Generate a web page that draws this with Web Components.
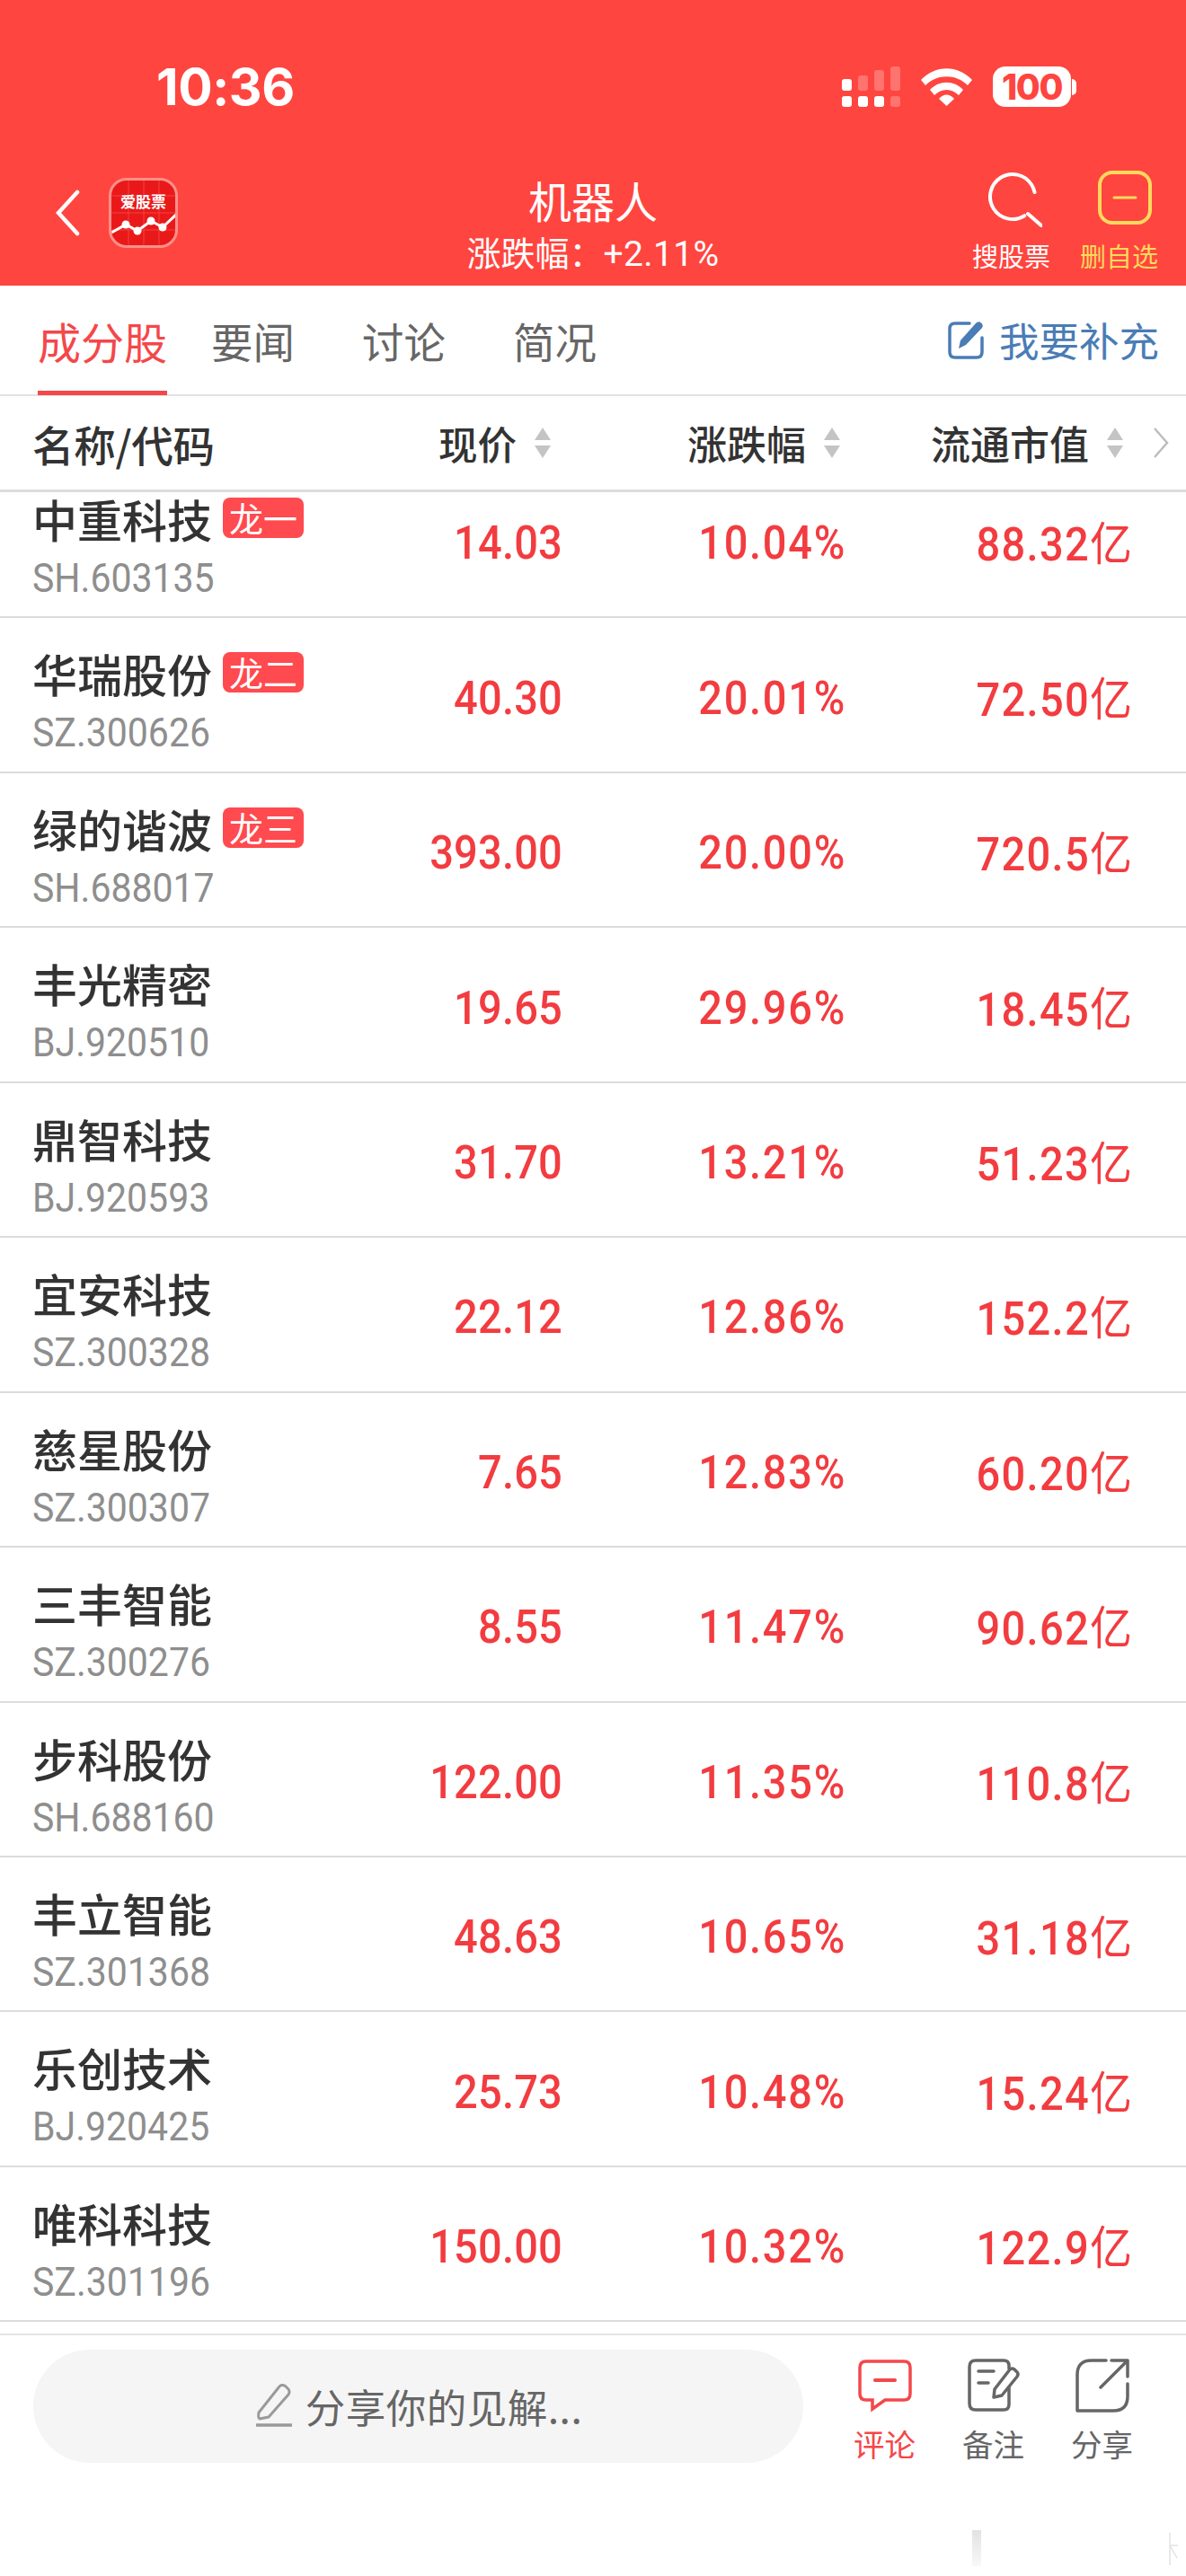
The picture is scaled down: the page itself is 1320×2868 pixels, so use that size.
<!DOCTYPE html>
<html lang="zh-CN">
<head>
<meta charset="utf-8">
<title>机器人</title>
<style>
  html, body { margin: 0; padding: 0; background: #fff; }
  body {
    width: 1320px;
    height: 2868px;
    overflow: hidden;
    font-family: "Noto Sans CJK SC", "Noto Sans", sans-serif;
  }
  app-page { height: 2868px; }
</style>
</head>
<body>
<app-page>
  <nav-header slot="top" title="机器人" change="+2.11%"></nav-header>
  <tab-bar slot="top"></tab-bar>
  <stock-table>
    <stock-row code="SH.603135" price="14.03" pct="10.04%" cap="88.32" tag="龙一" style="margin-top:-32px">中重科技</stock-row>
    <stock-row code="SZ.300626" price="40.30" pct="20.01%" cap="72.50" tag="龙二">华瑞股份</stock-row>
    <stock-row code="SH.688017" price="393.00" pct="20.00%" cap="720.5" tag="龙三">绿的谐波</stock-row>
    <stock-row code="BJ.920510" price="19.65" pct="29.96%" cap="18.45">丰光精密</stock-row>
    <stock-row code="BJ.920593" price="31.70" pct="13.21%" cap="51.23">鼎智科技</stock-row>
    <stock-row code="SZ.300328" price="22.12" pct="12.86%" cap="152.2">宜安科技</stock-row>
    <stock-row code="SZ.300307" price="7.65" pct="12.83%" cap="60.20">慈星股份</stock-row>
    <stock-row code="SZ.300276" price="8.55" pct="11.47%" cap="90.62">三丰智能</stock-row>
    <stock-row code="SH.688160" price="122.00" pct="11.35%" cap="110.8">步科股份</stock-row>
    <stock-row code="SZ.301368" price="48.63" pct="10.65%" cap="31.18">丰立智能</stock-row>
    <stock-row code="BJ.920425" price="25.73" pct="10.48%" cap="15.24">乐创技术</stock-row>
    <stock-row code="SZ.301196" price="150.00" pct="10.32%" cap="122.9">唯科科技</stock-row>
  </stock-table>
  <comment-bar></comment-bar>
</app-page>

<script>
const CJK = '"Noto Sans CJK SC", "Noto Sans", sans-serif';

class AppPage extends HTMLElement {
  constructor() {
    super();
    this.attachShadow({ mode: 'open' });
    this.shadowRoot.innerHTML = `
      <style>
        :host { display: flex; flex-direction: column; width: 1320px; background: #fff; }
      </style>
      <slot name="top"></slot>
      <slot></slot>`;
  }
}

class NavHeader extends HTMLElement {
  connectedCallback() {
    const root = this.attachShadow({ mode: 'open' });
    root.innerHTML = `
      <style>
        :host { display: block; height: 318px; background: #ff453f; color: #fff; font-family: ${CJK}; }
        .status { height: 190px; box-sizing: border-box; padding: 74px 122px 0 174px; display: flex; justify-content: space-between; }
        .time { font: 700 57px/46px Inter, sans-serif; letter-spacing: -.4px; }
        .status-icons { display: flex; align-items: flex-start; }
        .signal { margin-right: 23px; display: block; }
        .wifi { margin: 2px 23px 0 0; display: block; }
        .battery { display: flex; align-items: center; height: 45px; }
        .battery-body { width: 87px; height: 45px; border-radius: 14px; background: #fff; color: #ff453f;
          font: 800 39px/45px Inter, sans-serif; letter-spacing: -1.4px; text-align: center; }
        .battery-tip { width: 5px; height: 18px; margin-left: 1px; background: #fff; border-radius: 0 5px 5px 0; }
        .nav { height: 128px; display: grid; grid-template-columns: 1fr auto 1fr; align-items: start; }
        .left { display: flex; align-items: center; padding: 8px 0 0 62px; gap: 32px; }
        .left svg { display: block; }
        .center { text-align: center; padding-top: 4px; }
        .title { font-size: 48px; line-height: 56px; }
        .sub { font-size: 38px; line-height: 44px; margin-top: 8px; white-space: nowrap; }
        .sub b { font: 400 39px/44px Roboto, sans-serif; letter-spacing: .4px; }
        .right { display: flex; justify-content: flex-end; padding-right: 31px; gap: 33px; }
        .action { display: flex; flex-direction: column; align-items: center; font-size: 29px; line-height: 34px; }
        .action svg { display: block; margin-bottom: 15px; transform: translate(2px, 1px); }
        .fav { color: #ffd95e; }
        .fav svg { transform: translateX(7px); }
      </style>
      <div class="status">
        <div class="time">10:36</div>
        <div class="status-icons">
          <svg class="signal" width="65" height="45" viewBox="0 0 65 45">
            <rect x="0" y="14" width="11" height="13" rx="3" fill="#fff"/>
            <g fill="#fff" opacity=".25">
              <rect x="18" y="10" width="11" height="17" rx="3"/>
              <rect x="36" y="4" width="11" height="23" rx="3"/>
              <rect x="54" y="0" width="11" height="27" rx="3"/>
              <rect x="54" y="33" width="11" height="12" rx="3"/>
            </g>
            <rect x="0" y="33" width="11" height="12" rx="3" fill="#fff"/>
            <rect x="18" y="33" width="11" height="12" rx="3" fill="#fff"/>
            <rect x="36" y="33" width="11" height="12" rx="3" fill="#fff"/>
          </svg>
          <svg class="wifi" width="57" height="42" viewBox="0 0 57 42" fill="#fff">
            <path d="M0 13 C16 -4 41 -4 57 13 L52 19 C39 6 18 6 5 19Z"/>
            <path d="M10 24 C20 13 37 13 47 24 L42 30 C34 22 23 22 15 30Z"/>
            <path d="M20 34 C25 28 32 28 37 34 L28.5 42Z"/>
          </svg>
          <div class="battery">
            <div class="battery-body">100</div>
            <div class="battery-tip"></div>
          </div>
        </div>
      </div>
      <div class="nav">
        <div class="left">
          <svg width="27" height="52" viewBox="0 0 27 52" fill="none" stroke="#fff" stroke-width="4.5" stroke-linecap="round">
            <path d="M24 3 L3 26 L24 49"/>
          </svg>
          <app-logo></app-logo>
        </div>
        <div class="center">
          <div class="title">${this.getAttribute('title')}</div>
          <div class="sub">涨跌幅：<b>${this.getAttribute('change')}</b></div>
        </div>
        <div class="right">
          <div class="action">
            <svg width="66" height="62" viewBox="0 0 66 62" fill="none" stroke="#fff" stroke-width="4" stroke-linecap="round">
              <circle cx="33" cy="28" r="25" stroke-dasharray="126 31" transform="rotate(58 33 28)"/>
              <path d="M50 47 L66 61"/>
            </svg>
            搜股票
          </div>
          <div class="action fav">
            <svg width="60" height="62" viewBox="0 0 60 62" fill="none" stroke="#ffd95e" stroke-width="4" stroke-linecap="round">
              <rect x="2" y="2" width="56" height="56" rx="14"/>
              <path d="M18 30 H42" stroke-width="3"/>
            </svg>
            删自选
          </div>
        </div>
      </div>`;
  }
}

class AppLogo extends HTMLElement {
  constructor() {
    super();
    this.attachShadow({ mode: 'open' });
    this.shadowRoot.innerHTML = `
      <style>
        :host { display: block; position: relative; width: 77px; height: 78px; box-sizing: border-box;
          border: 3px solid #ff8f8a; border-radius: 20px; background: #e9191a; overflow: hidden; }
        svg { display: block; position: absolute; left: -3px; top: -3px; }
        span { position: absolute; left: 0; right: 0; top: 12px; text-align: center; color: #fff;
          font: 700 17px/22px ${CJK}; }
      </style>
      <svg width="77" height="78" viewBox="0 0 77 78">
        <path d="M22 0 V78 M39 0 V78 M56 0 V78 M0 20 H77 M0 39 H77 M0 58 H77" stroke="#f4423e" stroke-width="1"/>
        <path d="M3 61 L19 52 L32 59 L47 48 L60 55 L76 40" fill="none" stroke="#fff" stroke-width="3"/>
        <g fill="#fff">
          <circle cx="19" cy="52" r="4.5"/><circle cx="32" cy="59" r="4.5"/>
          <circle cx="47" cy="48" r="4.5"/><circle cx="60" cy="55" r="4.5"/>
        </g>
      </svg>
      <span>爱股票</span>`;
  }
}

class TabBar extends HTMLElement {
  constructor() {
    super();
    this.attachShadow({ mode: 'open' });
    this.shadowRoot.innerHTML = `
      <style>
        :host { display: flex; height: 123px; box-sizing: border-box; border-bottom: 2px solid #e2e2e2;
          font-family: ${CJK}; padding-left: 42px; align-items: stretch; }
        .tab { font-size: 46.500px; line-height: 122px; color: #666; margin-right: 75px; white-space: nowrap; }
        .on { color: #f4474a; font-size: 48px; box-shadow: inset 0 -5px 0 #f4474a; margin-right: 49px; height: 122px; width: 144px; text-align: center; }
        .add { margin-left: auto; margin-right: 30px; display: flex; align-items: center; gap: 15px; color: #4a7cb5; font-size: 44.500px; padding-bottom: 2px; }
        svg { display: block; }
      </style>
      <div class="tab on">成分股</div>
      <div class="tab">要闻</div>
      <div class="tab">讨论</div>
      <div class="tab">简况</div>
      <div class="add">
        <svg width="42" height="44" viewBox="0 0 42 44" fill="none">
          <path d="M24 4 H8 Q2 4 2 10 V36 Q2 42 8 42 H32 Q38 42 38 36 V20" stroke="#4a7cb5" stroke-width="3.5" stroke-linecap="round"/>
          <path d="M12 32 L14 23 L31 4 Q34 1 37 3.500 Q40 6 38 9 L20 28Z" fill="#4a7cb5"/>
        </svg>
        我要补充
      </div>`;
  }
}

class SortCarets extends HTMLElement {
  constructor() {
    super();
    this.attachShadow({ mode: 'open' });
    this.shadowRoot.innerHTML = `
      <style>
        :host { display: block; width: 18px; height: 34px; }
        svg { display: block; }
      </style>
      <svg width="18" height="34" viewBox="0 0 18 34" fill="#c4c4c4">
        <path d="M9 0 L18 14 H0Z"/>
        <path d="M9 34 L0 20 H18Z"/>
      </svg>`;
  }
}

class StockTable extends HTMLElement {
  constructor() {
    super();
    this.attachShadow({ mode: 'open' });
    this.shadowRoot.innerHTML = `
      <style>
        :host { display: block; font-family: ${CJK}; }
        .head { height: 107px; box-sizing: border-box; border-bottom: 3px solid #dcdcdc; padding: 0 17px 0 36px;
          display: grid; grid-template-columns: 1fr 322px 368px; align-items: center; color: #333;
          font-size: 44px; font-weight: 500; }
        .col { display: flex; justify-content: flex-end; align-items: center; gap: 20px; }
        .first { display: flex; justify-content: space-between; align-items: center; }
        .first .label { font-size: 46.500px; letter-spacing: -.3px; }
        .first .now { display: flex; align-items: center; gap: 20px; font-size: 43.500px; }
        .last svg { display: block; margin-left: 13px; margin-right: 2px; }
        .list { height: 2038px; overflow: hidden; display: flex; flex-direction: column; }
        .head > div { white-space: nowrap; }
      </style>
      <div class="head">
        <div class="first"><span class="label">名称/代码</span><span class="now">现价<sort-carets></sort-carets></span></div>
        <div class="col">涨跌幅<sort-carets></sort-carets></div>
        <div class="col last">流通市值<sort-carets></sort-carets>
          <svg width="18" height="36" viewBox="0 0 18 36" fill="none" stroke="#bdbdbd" stroke-width="2.500"><path d="M2 2 L16 18 L2 34"/></svg>
        </div>
      </div>
      <div class="list"><slot></slot></div>`;
  }
}

class StockRow extends HTMLElement {
  connectedCallback() {
    const tag = this.getAttribute('tag');
    const root = this.attachShadow({ mode: 'open' });
    root.innerHTML = `
      <style>
        :host { flex: 0 0 172.45px; box-sizing: border-box; display: grid; grid-template-columns: 1fr 220px 316px 318px;
          padding: 0 60px 0 36px; border-bottom: 2px solid #dcdcdc; font-family: ${CJK}; align-items: center; }
        .id { align-self: start; padding-top: 31px; min-width: 0; }
        .name { display: flex; align-items: center; gap: 12px; color: #333; font-size: 50px; font-weight: 500; line-height: 60px; white-space: nowrap; }
        .tag { flex: none; width: 90px; height: 45px; border-radius: 8px; background: #ff4a4f; color: #fff; font-size: 38px;
          line-height: 44px; font-weight: 400; text-align: center; margin-top: -1px; }
        .code { font: 400 41px/46px Roboto, sans-serif; color: #8e8e8e; margin-top: 14px; transform: scaleY(1.06); transform-origin: left center; }
        .num { justify-self: end; color: #f23c40; font: 500 47px/60px Roboto, sans-serif; padding-top: 6px;
          transform: scaleY(1.1); white-space: nowrap; }
        .price { letter-spacing: .2px; }
        .pct { letter-spacing: 1.700px; }
        .cap { letter-spacing: 1.300px; }
        .unit { font-family: ${CJK}; font-weight: 400; font-size: 47px; letter-spacing: 0; }
      </style>
      <div class="id">
        <div class="name"><slot></slot>${tag ? `<span class="tag">${tag}</span>` : ''}</div>
        <div class="code">${this.getAttribute('code')}</div>
      </div>
      <div class="num price">${this.getAttribute('price')}</div>
      <div class="num pct">${this.getAttribute('pct')}</div>
      <div class="num cap">${this.getAttribute('cap')}<span class="unit">亿</span></div>`;
  }
}

class CommentBar extends HTMLElement {
  constructor() {
    super();
    this.attachShadow({ mode: 'open' });
    this.shadowRoot.innerHTML = `
      <style>
        :host { display: flex; position: relative; margin-top: 12px; height: 270px; box-sizing: border-box; border-top: 2px solid #e4e4e4;
          padding: 16px 0 0 37px; font-family: ${CJK}; color: #666; }
        .input { width: 857px; height: 126px; border-radius: 63px; background: #f5f5f5; display: flex; justify-content: center;
          align-items: center; gap: 15px; font-size: 44.500px; box-sizing: border-box; padding: 0 0 2px 2px; }
        .input span { letter-spacing: .5px; white-space: nowrap; }
        .actions { display: grid; grid-template-columns: 121px 121px 121px; margin-left: 30px; align-items: start; }
        .act { display: flex; flex-direction: column; align-items: center; font-size: 34.500px; line-height: 40px; }
        .act svg { display: block; margin: 10px 0 14px; }
        .red { color: #f4474a; }
        /* faint leftovers in the reference's bottom right corner */
        .smudge { position: absolute; left: 1082px; top: 217px; width: 10px; height: 40px;
          background: linear-gradient(#e2e2e2, #f8f8f8); }
        .smudge2 { position: absolute; left: 1296px; top: 220px; display: block; }
      </style>
      <div class="input">
        <svg width="40" height="48" viewBox="0 0 40 48" fill="none" stroke="#9a9a9a" stroke-width="3" stroke-linejoin="round" stroke-linecap="round">
          <path d="M3 32 L26 3 Q29 0 33 3 L36 6 Q38 9 36 12 L14 37 L4 39 Q2 38 3 32Z"/>
          <path d="M0 46 H40" stroke-width="3.500" stroke-linecap="butt"/>
        </svg>
        <span>分享你的见解...</span>
      </div>
      <div class="actions">
        <div class="act red">
          <svg width="60" height="60" viewBox="0 0 60 60" fill="none" stroke="#f4474a" stroke-width="3.500" stroke-linejoin="miter">
            <path d="M9 3 H51 Q58 3 58 10 V39 Q58 46 51 46 H30 L16 56 V46 H9 Q2 46 2 39 V10 Q2 3 9 3Z"/>
            <path d="M19 24 H41" stroke-width="4" stroke-linecap="round"/>
          </svg>
          评论
        </div>
        <div class="act">
          <svg width="60" height="60" viewBox="0 0 60 60" fill="none" stroke="#666" stroke-width="3.500" stroke-linecap="round" stroke-linejoin="round">
            <path d="M47 11 V8 Q47 2 41 2 H10 Q3 2 3 9 V50 Q3 57 10 57 H41 Q47 57 47 51 V32"/>
            <path d="M13 14 H30 M13 27 H24" stroke-width="3.500"/>
            <path d="M30 43 L31 34 L48 12 Q50 10 53 12 L56 15 Q58 17 56 20 L39 41Z"/>
          </svg>
          备注
        </div>
        <div class="act">
          <svg width="60" height="60" viewBox="0 0 60 60" fill="none" stroke="#666" stroke-width="3.500" stroke-linecap="round" stroke-linejoin="round">
            <path d="M34 2 H18 Q2 2 2 18 V58 H42 Q58 58 58 42 V28"/>
            <path d="M28 32 L58 2 M40 2 H58 V20"/>
          </svg>
          分享
        </div>
      </div>
      <div class="smudge"></div>
      <svg class="smudge2" width="16" height="36" viewBox="0 0 16 36" fill="none" stroke="#e2e2e2" stroke-width="1.500">
        <path d="M6 0 V36 M6 14 L14 28 M6 14 H15"/>
      </svg>`;
  }
}

customElements.define('app-page', AppPage);
customElements.define('nav-header', NavHeader);
customElements.define('app-logo', AppLogo);
customElements.define('tab-bar', TabBar);
customElements.define('sort-carets', SortCarets);
customElements.define('stock-table', StockTable);
customElements.define('stock-row', StockRow);
customElements.define('comment-bar', CommentBar);
</script>
</body>
</html>
